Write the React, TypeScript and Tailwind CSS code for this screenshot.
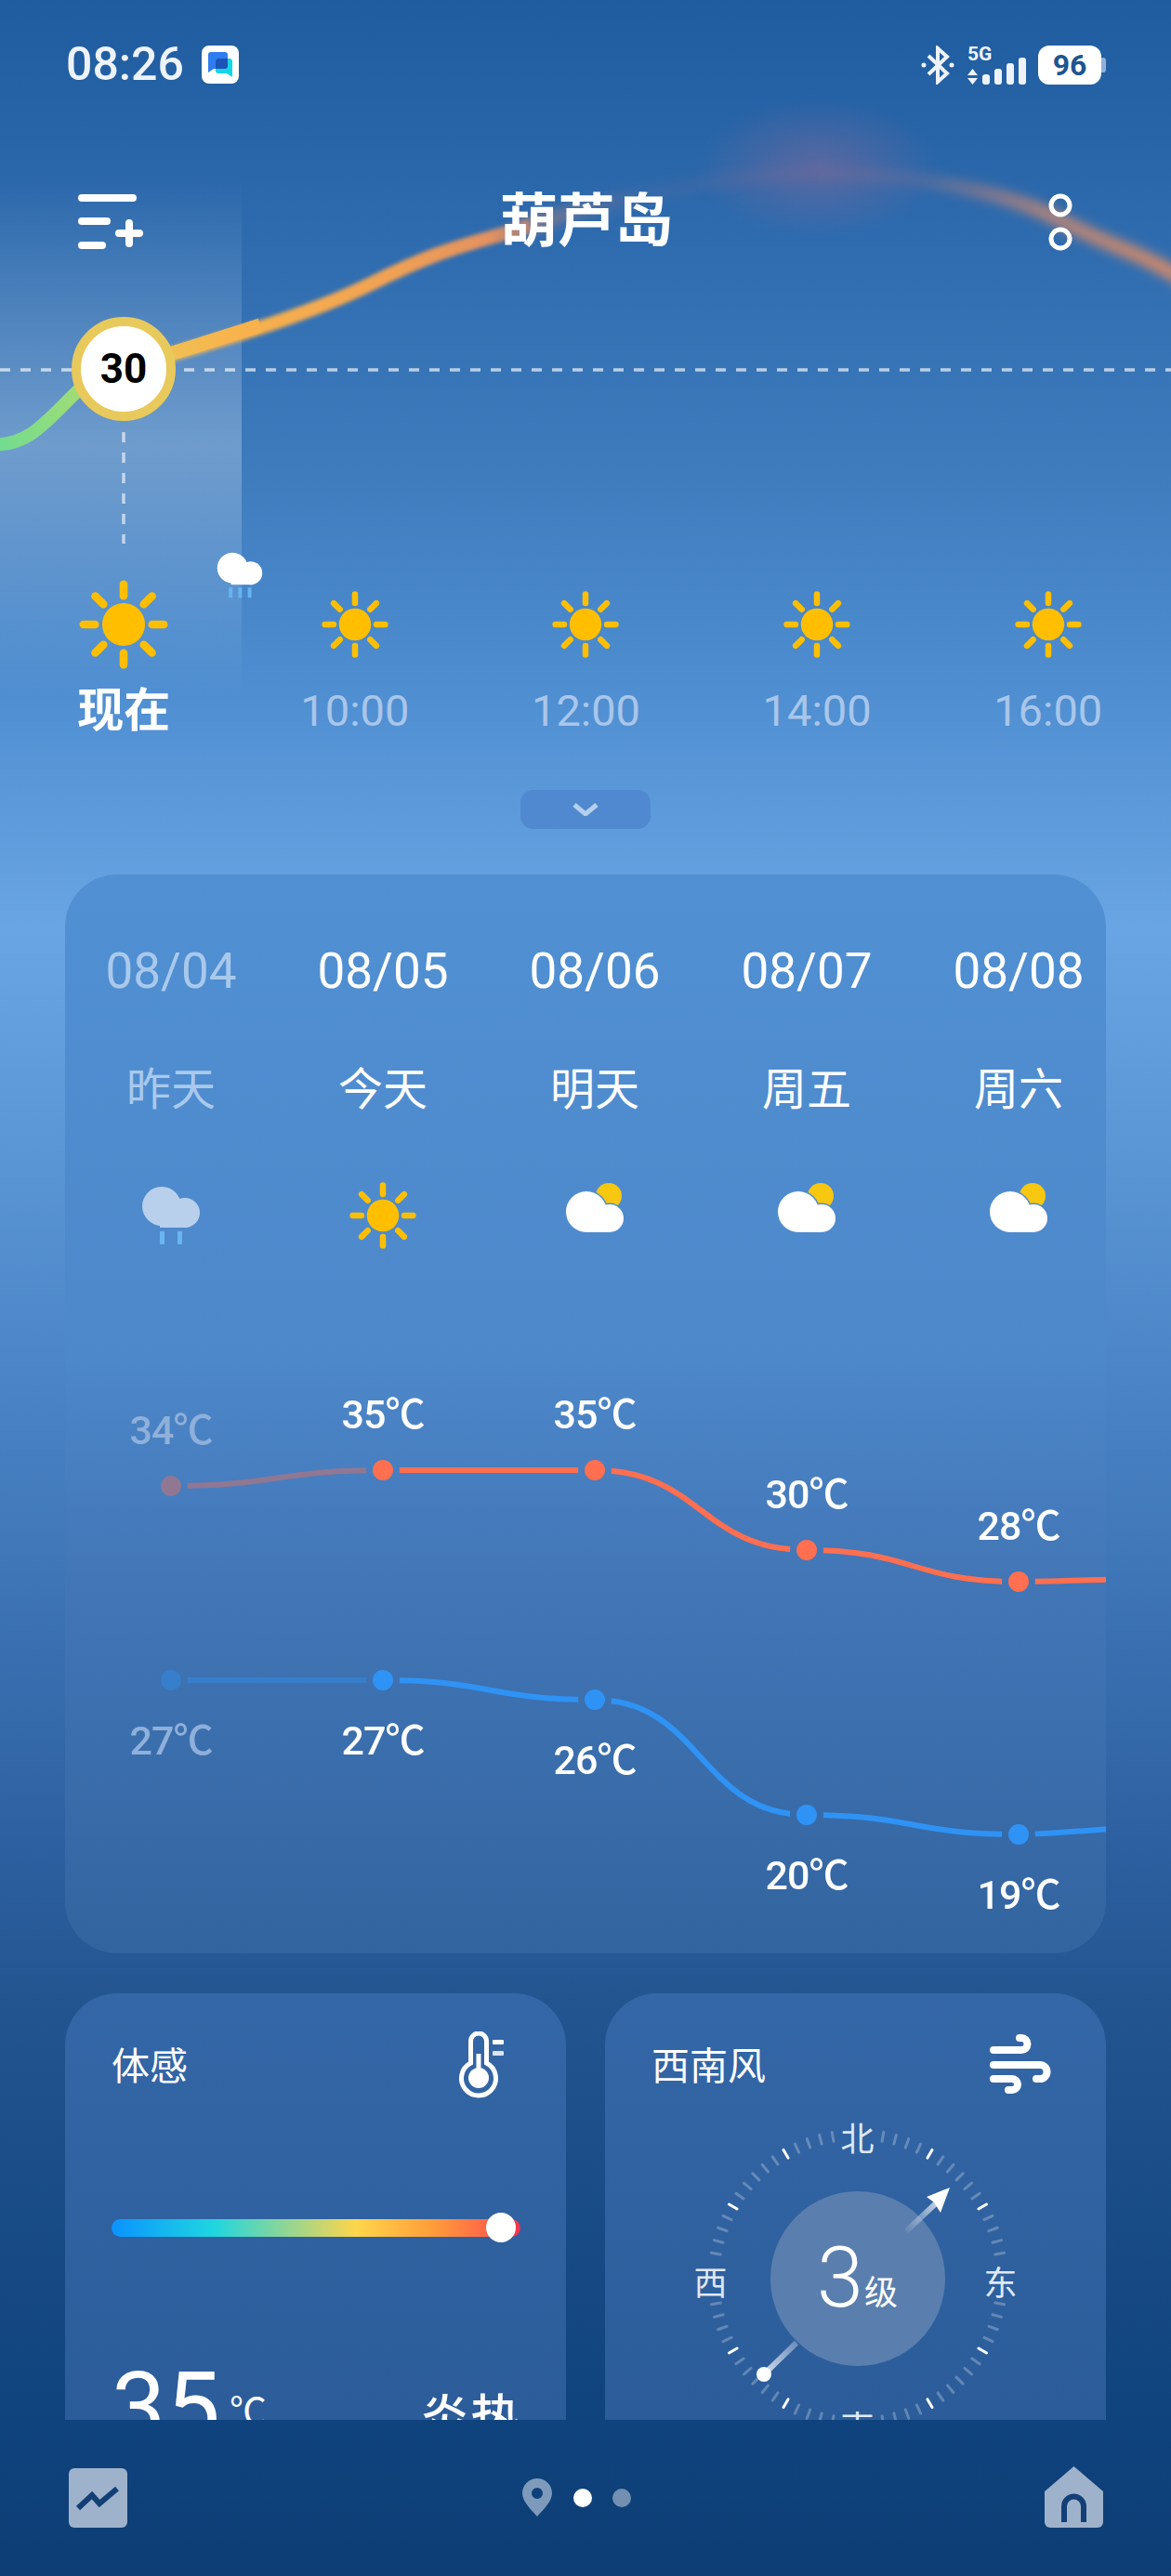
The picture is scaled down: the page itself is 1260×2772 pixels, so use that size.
const hours = ["10:00", "12:00", "14:00", "16:00"];

const days = [
  { date: "08/04", label: "昨天", icon: "rain", high: 34, low: 27, hy: 158, ly: 367, past: true },
  { date: "08/05", label: "今天", icon: "sun", high: 35, low: 27, hy: 141, ly: 367 },
  { date: "08/06", label: "明天", icon: "cloud", high: 35, low: 26, hy: 141, ly: 388 },
  { date: "08/07", label: "周五", icon: "cloud", high: 30, low: 20, hy: 227, ly: 512 },
  { date: "08/08", label: "周六", icon: "cloud", high: 28, low: 19, hy: 261, ly: 533 },
];

const colX = (i: number) => 114 + i * 228;

function SunIcon({ size }: { size: number }) {
  const rays = [0, 45, 90, 135, 180, 225, 270, 315];
  return (
    <svg width={size} height={size} viewBox="0 0 100 100">
      <circle cx="50" cy="50" r="24" fill="#ffbf00" />
      {rays.map((r) => (
        <line key={r} x1="50" y1="18" x2="50" y2="5" stroke="#ffbf00" strokeWidth="9" strokeLinecap="round" transform={`rotate(${r} 50 50)`} />
      ))}
    </svg>
  );
}

function CloudSun() {
  return (
    <svg width="64" height="76" viewBox="0 0 64 76">
      <circle cx="47" cy="17" r="14" fill="#f8c70f" />
      <circle cx="23" cy="34" r="23.5" fill="#4f8ccf" />
      <circle cx="48" cy="41" r="16.5" fill="#4f8ccf" />
      <circle cx="23" cy="34" r="22" fill="#ffffff" />
      <circle cx="48" cy="41" r="15" fill="#ffffff" />
      <rect x="22" y="32" width="27" height="24" fill="#ffffff" />
    </svg>
  );
}

function RainCloud({ w, fill, drop, drops }: { w: number; fill: string; drop: string; drops: number[] }) {
  return (
    <svg width={w} height={w} viewBox="0 0 64 64">
      <circle cx="22" cy="22" r="21" fill={fill} />
      <circle cx="47" cy="29" r="16" fill={fill} />
      <rect x="20" y="26" width="30" height="19" fill={fill} />
      {drops.map((x) => (
        <rect key={x} x={x} y="49" width="5" height="14" fill={drop} />
      ))}
    </svg>
  );
}

function Backdrop() {
  return (
    <svg className="absolute left-0 top-0" width="1260" height="800" viewBox="0 0 1260 800">
      <defs>
        <linearGradient id="arc" gradientUnits="userSpaceOnUse" x1="133" y1="0" x2="1260" y2="0">
          <stop offset="0" stopColor="#e9c95a" />
          <stop offset="0.1" stopColor="#f8b44c" />
          <stop offset="0.25" stopColor="#f2a252" />
          <stop offset="0.35" stopColor="#e4915f" />
          <stop offset="0.41" stopColor="#d08a70" stopOpacity="0.4" />
          <stop offset="0.5" stopColor="#b5768a" stopOpacity="0.08" />
          <stop offset="0.66" stopColor="#8f668f" stopOpacity="0.18" />
          <stop offset="0.76" stopColor="#c07f7c" stopOpacity="0.18" />
          <stop offset="0.88" stopColor="#d98c6c" stopOpacity="0.75" />
          <stop offset="1" stopColor="#e08c62" stopOpacity="0.9" />
        </linearGradient>
        <linearGradient id="green" gradientUnits="userSpaceOnUse" x1="0" y1="478" x2="100" y2="410">
          <stop offset="0" stopColor="#74dc8e" />
          <stop offset="1" stopColor="#a8dc72" />
        </linearGradient>
        <radialGradient id="peak">
          <stop offset="0" stopColor="#8a6a98" stopOpacity="0.5" />
          <stop offset="1" stopColor="#8a6a98" stopOpacity="0" />
        </radialGradient>
        <filter id="soft" x="-10%" y="-30%" width="120%" height="160%">
          <feGaussianBlur stdDeviation="2" />
        </filter>
        <filter id="softer" x="-10%" y="-50%" width="120%" height="200%">
          <feGaussianBlur stdDeviation="6" />
        </filter>
      </defs>
      <ellipse cx="880" cy="180" rx="130" ry="75" fill="url(#peak)" />
      <path d="M133 397 C220 370 320 345 400 305 S500 265 570 243" fill="none" stroke="url(#arc)" strokeWidth="15" filter="url(#soft)" />
      <path d="M133 397 C190 378 225 368 280 350" fill="none" stroke="url(#arc)" strokeWidth="15" />
      <path d="M560 246 C650 215 780 187 880 187 S1080 205 1141 237 S1230 272 1280 305" fill="none" stroke="url(#arc)" strokeWidth="16" filter="url(#softer)" />
      <path d="M-10 478 C35 482 55 445 95 410" fill="none" stroke="url(#green)" strokeWidth="14" />
      <line x1="0" y1="398" x2="1260" y2="398" stroke="#ffffff" strokeOpacity="0.65" strokeWidth="3.5" strokeDasharray="11 11" />
      <line x1="133" y1="465" x2="133" y2="585" stroke="#ffffff" strokeOpacity="0.6" strokeWidth="3.5" strokeDasharray="11 11" />
    </svg>
  );
}

function StatusBar() {
  return (
    <div className="flex h-[91px] items-start justify-between pl-[71px] pr-[70px] pt-[49px] text-white">
      <div className="flex items-center gap-[19px]">
        <span className="text-[50px] leading-[41px] font-medium text-[#eef3fb]">08:26</span>
        <div className="h-[41px] w-[40px] rounded-[8px] bg-white p-[6px]">
          <svg width="28" height="29" viewBox="0 0 28 29">
            <path d="M1 4 a3 3 0 0 1 3 -3 H19 a3 3 0 0 1 3 3 V16 a3 3 0 0 1 -3 3 H7 L1 23 Z" fill="#2f7df0" />
            <path d="M9 11 a3 3 0 0 1 3 -3 H24 a3 3 0 0 1 3 3 V28 L21 24 H12 a3 3 0 0 1 -3 -3 Z" fill="#14d6e6" />
            <path d="M9 11 a3 3 0 0 1 3 -3 H22 V16 a3 3 0 0 1 -3 3 H9 Z" fill="#1d52b8" />
          </svg>
        </div>
      </div>
      <div className="flex items-start">
        <svg width="36" height="42" viewBox="0 0 36 42" fill="none" stroke="#eef3fb" strokeWidth="4">
          <path d="M8 11 L28 30 L18 39 V3 L28 12 L8 31" />
          <circle cx="3" cy="21" r="2.5" fill="#eef3fb" stroke="none" />
          <circle cx="33" cy="21" r="2.5" fill="#eef3fb" stroke="none" />
        </svg>
        <div className="relative ml-[14px] h-[42px] w-[63px]">
          <span className="absolute left-0 top-[-2px] text-[21px] leading-[22px] font-bold text-[#eef3fb]">5G</span>
          <svg className="absolute left-0 top-[25px]" width="11" height="17" viewBox="0 0 11 17" fill="#eef3fb">
            <path d="M5.5 0 L11 7 H0 Z M0 10 H11 L5.5 17 Z" />
          </svg>
          <div className="absolute bottom-0 right-0 flex items-end gap-[5px]">
            <div className="h-[11px] w-[8px] rounded-[3px] bg-[#eef3fb]" />
            <div className="h-[17px] w-[8px] rounded-[3px] bg-[#eef3fb]" />
            <div className="h-[23px] w-[8px] rounded-[3px] bg-[#eef3fb]" />
            <div className="h-[29px] w-[8px] rounded-[3px] bg-[#eef3fb]" />
          </div>
        </div>
        <div className="ml-[13px] flex items-center">
          <div className="flex h-[42px] w-[68px] items-center justify-center rounded-[12px] bg-white text-[32px] font-bold text-[#1f5590]">96</div>
          <div className="h-[16px] w-[5px] rounded-r-[3px] bg-[#8fb0d8]" />
        </div>
      </div>
    </div>
  );
}

function Header() {
  return (
    <div className="mt-[117px] flex h-[62px] items-center justify-between pl-[84px] pr-[104px] text-white">
      <svg width="70" height="60" viewBox="0 0 70 60" fill="none" stroke="#ffffff" strokeWidth="8" strokeLinecap="round">
        <line x1="4" y1="4" x2="59" y2="4" />
        <line x1="4" y1="29" x2="31" y2="29" />
        <line x1="4" y1="55" x2="26" y2="55" />
        <line x1="44" y1="42" x2="66" y2="42" />
        <line x1="55" y1="31" x2="55" y2="53" />
      </svg>
      <h1 className="mr-[18px] text-[62px] leading-[62px] font-bold">葫芦岛</h1>
      <svg width="30" height="62" viewBox="0 0 30 62" fill="none" stroke="#ffffff" strokeWidth="5">
        <circle cx="15" cy="13" r="10" />
        <circle cx="15" cy="49" r="10" />
      </svg>
    </div>
  );
}

function Hourly() {
  return (
    <div className="relative ml-[9px] mt-[354px] grid w-[1243px] grid-cols-5 items-end">
      <div className="flex flex-col items-center">
        <SunIcon size={96} />
        <span className="mt-[13px] text-[50px] leading-[64px] font-bold text-white">现在</span>
      </div>
      {hours.map((h) => (
        <div key={h} className="flex flex-col items-center">
          <SunIcon size={72} />
          <span className="mt-[25px] text-[47px] leading-[64px] text-[#a9c6ea]">{h}</span>
        </div>
      ))}
      <div className="absolute left-[224px] top-[-30px]">
        <RainCloud w={50} fill="#ffffff" drop="#66b4f2" drops={[17, 30, 43]} />
      </div>
    </div>
  );
}

function TrendChart() {
  const line = (key: "hy" | "ly", i: number) => {
    const x0 = colX(i);
    const x1 = colX(i + 1);
    const y0 = days[i][key];
    const y1 = i === 4 ? (key === "hy" ? 255 : 518) : days[i + 1][key];
    const c = i === 4 ? 60 : 114;
    return `M${x0} ${y0} C${x0 + c} ${y0} ${x1 - c} ${y1} ${x1} ${y1}`;
  };
  return (
    <div className="relative h-[661px] w-[1120px]">
      <svg className="absolute left-0 top-0" width="1120" height="661" viewBox="0 0 1120 661">
        <defs>
          <mask id="gaps" maskUnits="userSpaceOnUse" x="0" y="0" width="1120" height="661">
            <rect width="1120" height="661" fill="#ffffff" />
            {days.map((d, i) => (
              <g key={d.date} fill="#000000">
                <circle cx={colX(i)} cy={d.hy} r="18" />
                <circle cx={colX(i)} cy={d.ly} r="18" />
              </g>
            ))}
          </mask>
        </defs>
        <g mask="url(#gaps)" fill="none" strokeWidth="6">
          {days.map((d, i) => (
            <g key={d.date} opacity={d.past ? 0.4 : 1}>
              <path d={line("hy", i)} stroke="#ff6f50" />
              <path d={line("ly", i)} stroke="#2f93f5" />
            </g>
          ))}
        </g>
        {days.map((d, i) => (
          <g key={d.date} opacity={d.past ? 0.4 : 1}>
            <circle cx={colX(i)} cy={d.hy} r="11" fill="#ff6f50" />
            <circle cx={colX(i)} cy={d.ly} r="11" fill="#2f93f5" />
          </g>
        ))}
      </svg>
      {days.map((d, i) => (
        <div key={d.date} className={d.past ? "text-[#8fb0da]" : "text-white"}>
          <span className="absolute -translate-x-1/2 -translate-y-1/2 text-[43px] leading-[50px] font-medium tracking-[-1px] whitespace-nowrap" style={{ left: colX(i), top: d.hy - 60 }}>
            {d.high}℃
          </span>
          <span className="absolute -translate-x-1/2 -translate-y-1/2 text-[43px] leading-[50px] font-medium tracking-[-1px] whitespace-nowrap" style={{ left: colX(i), top: d.ly + 65 }}>
            {d.low}℃
          </span>
        </div>
      ))}
    </div>
  );
}

function Forecast() {
  return (
    <div className="mx-[70px] mt-[49px] h-[1161px] w-[1120px] shrink-0 overflow-hidden rounded-[56px] bg-[linear-gradient(180deg,#5090d3_0%,#4d88ca_45%,#4276b7_65%,#32649f_100%)]">
      <div className="grid grid-cols-[repeat(5,228px)] pt-[74px]">
        {days.map((d) => (
          <div key={d.date} className={`flex flex-col items-center ${d.past ? "text-[#a9c9ec]" : "text-white"}`}>
            <span className="text-[53px] leading-[60px]">{d.date}</span>
            <span className="mt-[68px] text-[48px] leading-[60px]">{d.label}</span>
            <div className="mt-[67px] flex h-[76px] items-center justify-center">
              {d.icon === "sun" && <SunIcon size={72} />}
              {d.icon === "cloud" && <CloudSun />}
              {d.icon === "rain" && <RainCloud w={64} fill="#b9d0ec" drop="#6ab5f0" drops={[20, 39]} />}
            </div>
          </div>
        ))}
      </div>
      <div className="mt-[95px]">
        <TrendChart />
      </div>
    </div>
  );
}

function FeelCard() {
  return (
    <div className="h-[560px] rounded-[56px] bg-[linear-gradient(180deg,#3467a7_0%,#2a5a97_100%)] pl-[50px] pr-[49px] pt-[41px] text-white">
      <div className="flex items-start justify-between">
        <span className="mt-[15px] text-[41px] leading-[46px]">体感</span>
        <svg className="mr-[18px]" width="48" height="72" viewBox="0 0 48 72">
          <path d="M12.5 34 V10.5 a8.5 8.5 0 0 1 17 0 V34 a18.5 18.5 0 1 1 -17 0 Z" fill="none" stroke="#ffffff" strokeWidth="5" />
          <circle cx="21" cy="50" r="11" fill="#ffffff" />
          <rect x="18.5" y="24" width="5" height="20" fill="#ffffff" />
          <rect x="36" y="9" width="12" height="5" rx="1" fill="#ffffff" />
          <rect x="36" y="21" width="12" height="5" rx="1" fill="#dbe6f3" />
        </svg>
      </div>
      <div className="relative mt-[130px] h-[19px] rounded-full bg-[linear-gradient(90deg,#0a93ff_0%,#1fd6e0_25%,#ffd54a_60%,#ff9f3a_78%,#ff5a4a_95%,#f0304f_100%)]">
        <div className="absolute right-[5px] top-[-7px] h-[32px] w-[32px] rounded-full bg-white" />
      </div>
      <div className="mt-[124px] flex items-start justify-between">
        <div className="flex items-start">
          <span className="text-[104px] leading-[120px]">35</span>
          <span className="ml-[10px] mt-[40px] text-[40px] leading-[50px]">℃</span>
        </div>
        <span className="mt-[43px] text-[54px] leading-[60px] font-medium">炎热</span>
      </div>
    </div>
  );
}

function WindDial() {
  const ticks = Array.from({ length: 72 }, (_, i) => i * 5).filter((a) => a % 90 !== 0 && a % 90 !== 5 && a % 90 !== 85);
  return (
    <div className="relative mx-auto mt-[19px] h-[360px] w-[360px] text-[36px] leading-[44px] text-[#dfe8f5]">
      <svg className="absolute left-0 top-0" width="360" height="400" viewBox="0 0 360 400">
        {ticks.map((a) => (
          <line
            key={a}
            x1="180"
            y1="20"
            x2="180"
            y2="30"
            stroke="#ffffff"
            strokeOpacity={a % 30 === 0 ? 1 : 0.26}
            strokeWidth="3"
            strokeLinecap="round"
            transform={`rotate(${a} 180 180)`}
          />
        ))}
      </svg>
      <div className="absolute left-[86px] top-[86px] flex h-[188px] w-[188px] items-center justify-center rounded-full bg-[#5a7fae] text-white">
        <span className="text-[90px] leading-[90px] font-light">3</span>
        <span className="mt-[32px] ml-[1px] text-[36px] leading-[44px]">级</span>
      </div>
      <svg className="absolute left-0 top-0" width="360" height="400" viewBox="0 0 360 400">
        <defs>
          <linearGradient id="shaft" gradientUnits="userSpaceOnUse" x1="79" y1="283" x2="114" y2="249">
            <stop offset="0" stopColor="#ffffff" stopOpacity="0.8" />
            <stop offset="1" stopColor="#ffffff" stopOpacity="0.3" />
          </linearGradient>
          <linearGradient id="shaftTop" gradientUnits="userSpaceOnUse" x1="264" y1="99" x2="232" y2="129">
            <stop offset="0" stopColor="#ffffff" stopOpacity="0.7" />
            <stop offset="1" stopColor="#ffffff" stopOpacity="0.05" />
          </linearGradient>
        </defs>
        <line x1="79" y1="283" x2="114" y2="249" stroke="url(#shaft)" strokeWidth="6" />
        <line x1="264" y1="99" x2="232" y2="129" stroke="url(#shaftTop)" strokeWidth="6" />
        <path d="M279 82 L269 109 L262 98 L254 92 Z" fill="#ffffff" />
        <circle cx="79" cy="283" r="8" fill="#ffffff" />
      </svg>
      <span className="absolute left-[180px] top-[31px] -translate-x-1/2 -translate-y-1/2">北</span>
      <span className="absolute left-[334px] top-[186px] -translate-x-1/2 -translate-y-1/2">东</span>
      <span className="absolute left-[22px] top-[186px] -translate-x-1/2 -translate-y-1/2">西</span>
      <span className="absolute left-[180px] top-[320px] -translate-x-1/2">南</span>
    </div>
  );
}

function WindCard() {
  return (
    <div className="h-[560px] rounded-[56px] bg-[linear-gradient(180deg,#3467a7_0%,#2a5a97_100%)] pl-[50px] pr-[59px] pt-[44px] text-white">
      <div className="flex items-start justify-between">
        <span className="mt-[12px] text-[41px] leading-[46px]">西南风</span>
        <svg width="66" height="64" viewBox="0 0 66 64" fill="none" stroke="#ffffff" strokeWidth="8" strokeLinecap="round">
          <path d="M4 17 H34 a6.5 6.5 0 0 0 0 -13 H32" />
          <path d="M4 33 H54 a7.5 7.5 0 0 1 0 15 H50" />
          <path d="M4 48 H24 a6 6 0 0 1 0 12 H20" />
        </svg>
      </div>
      <div className="ml-[13px]">
        <WindDial />
      </div>
    </div>
  );
}

function BottomBar() {
  return (
    <div className="relative flex h-[168px] shrink-0 items-start justify-between bg-[linear-gradient(180deg,#0f437e_0%,#0d3d74_100%)] pl-[74px] pr-[73px] pt-[50px]">
      <svg className="mt-[2px]" width="63" height="64" viewBox="0 0 63 64">
        <rect width="63" height="64" rx="6" fill="#9fb2cc" />
        <path d="M10 43 L25 29 L33 38 L52 22" fill="none" stroke="#123f75" strokeWidth="6" />
      </svg>
      <div className="mr-[20px] mt-[13px] flex items-center">
        <svg width="32" height="41" viewBox="0 0 32 41">
          <path fillRule="evenodd" d="M16 0 C25 0 32 7 32 16 C32 25 22 34 16 41 C10 34 0 25 0 16 C0 7 7 0 16 0 Z M16 10 a6 6 0 1 0 0 12 a6 6 0 1 0 0 -12 Z" fill="#7e9abb" />
        </svg>
        <div className="ml-[23px] h-[20px] w-[20px] rounded-full bg-white" />
        <div className="ml-[22px] h-[20px] w-[20px] rounded-full bg-[#7390b3]" />
      </div>
      <svg width="63" height="66" viewBox="0 0 63 66">
        <path d="M31.5 0 L63 27 V60 a6 6 0 0 1 -6 6 H6 a6 6 0 0 1 -6 -6 V27 Z" fill="#9fb2cc" />
        <path d="M21 60 V43 a10.5 10.5 0 0 1 21 0 V60" fill="none" stroke="#123f75" strokeWidth="6" />
      </svg>
    </div>
  );
}

export default function App() {
  return (
    <div className="relative flex h-[2772px] w-[1260px] flex-col overflow-hidden bg-[linear-gradient(180deg,#1e5b9f_0%,#3e7bbd_18%,#4c8ccf_26%,#69a5e4_36%,#4a84c6_54%,#2c5f9f_72%,#22558f_78%,#0f437e_94%,#0d3d74_100%)] font-['Roboto','Noto_Sans_CJK_SC',sans-serif]">
      <div className="absolute left-0 top-[190px] h-[560px] w-[260px] bg-[linear-gradient(180deg,rgba(255,255,255,0)_0%,rgba(255,255,255,0.26)_52%,rgba(255,255,255,0)_100%)]" />
      <Backdrop />
      <div className="absolute left-[77px] top-[341px] flex h-[112px] w-[112px] items-center justify-center rounded-full border-[10px] border-[#e8c95b] bg-white text-[44px] font-bold text-black">
        30
      </div>
      <div className="relative flex h-[2604px] shrink-0 flex-col overflow-hidden">
        <StatusBar />
        <Header />
        <Hourly />
        <div className="mx-auto mt-[53px] flex h-[42px] w-[140px] shrink-0 items-center justify-center rounded-[14px] bg-[#5089cf]">
          <svg width="28" height="14" viewBox="0 0 28 14" fill="none" stroke="#b5d0ee" strokeWidth="5">
            <path d="M2 2 L14 12 L26 2" />
          </svg>
        </div>
        <Forecast />
        <div className="mx-[70px] mt-[43px] grid w-[1120px] shrink-0 grid-cols-[539px_539px] gap-[42px]">
          <FeelCard />
          <WindCard />
        </div>
      </div>
      <BottomBar />
    </div>
  );
}
